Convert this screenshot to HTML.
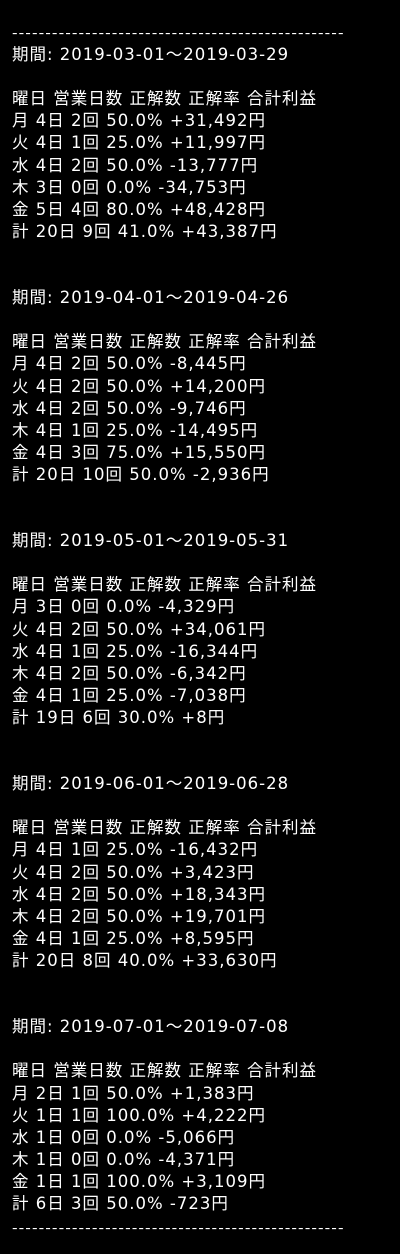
<!DOCTYPE html>
<html><head><meta charset="utf-8"><style>
html,body{margin:0;background:#000;width:400px;height:1254px;overflow:hidden}
pre{margin:0;padding:20px 0 0 12px;color:#fff;font-family:"DejaVu Sans","Noto Sans CJK JP",sans-serif;font-size:16.5px;letter-spacing:1px;line-height:22.1px;white-space:pre}
.d{letter-spacing:1.1px;font-family:"Noto Sans CJK JP",sans-serif;font-size:16px}
</style></head><body><pre><span class="d">--------------------------------------------------</span>
期間: 2019-03-01～2019-03-29

曜日 営業日数 正解数 正解率 合計利益
月 4日 2回 50.0% +31,492円
火 4日 1回 25.0% +11,997円
水 4日 2回 50.0% -13,777円
木 3日 0回 0.0% -34,753円
金 5日 4回 80.0% +48,428円
計 20日 9回 41.0% +43,387円


期間: 2019-04-01～2019-04-26

曜日 営業日数 正解数 正解率 合計利益
月 4日 2回 50.0% -8,445円
火 4日 2回 50.0% +14,200円
水 4日 2回 50.0% -9,746円
木 4日 1回 25.0% -14,495円
金 4日 3回 75.0% +15,550円
計 20日 10回 50.0% -2,936円


期間: 2019-05-01～2019-05-31

曜日 営業日数 正解数 正解率 合計利益
月 3日 0回 0.0% -4,329円
火 4日 2回 50.0% +34,061円
水 4日 1回 25.0% -16,344円
木 4日 2回 50.0% -6,342円
金 4日 1回 25.0% -7,038円
計 19日 6回 30.0% +8円


期間: 2019-06-01～2019-06-28

曜日 営業日数 正解数 正解率 合計利益
月 4日 1回 25.0% -16,432円
火 4日 2回 50.0% +3,423円
水 4日 2回 50.0% +18,343円
木 4日 2回 50.0% +19,701円
金 4日 1回 25.0% +8,595円
計 20日 8回 40.0% +33,630円


期間: 2019-07-01～2019-07-08

曜日 営業日数 正解数 正解率 合計利益
月 2日 1回 50.0% +1,383円
火 1日 1回 100.0% +4,222円
水 1日 0回 0.0% -5,066円
木 1日 0回 0.0% -4,371円
金 1日 1回 100.0% +3,109円
計 6日 3回 50.0% -723円
<span class="d">--------------------------------------------------</span></pre></body></html>
